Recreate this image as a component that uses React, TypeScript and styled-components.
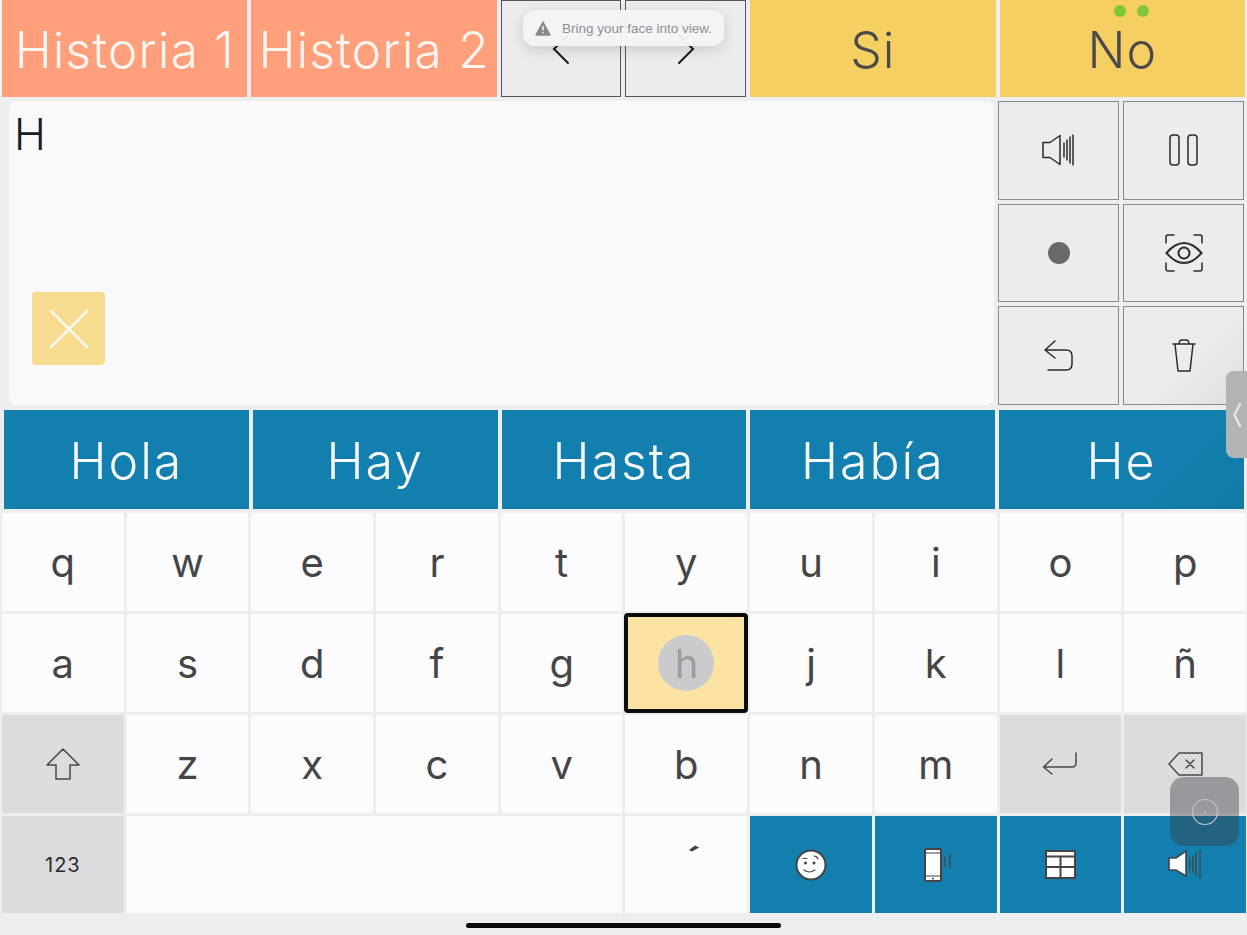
import React from "react";
import styled, { createGlobalStyle } from "styled-components";

const Global = createGlobalStyle`
  html, body { margin: 0; padding: 0; width: 1247px; height: 935px; overflow: hidden; background: #eeedf0; }
  * { box-sizing: border-box; }
  body { font-family: Inter, "Open Sans", "Liberation Sans", sans-serif; }
`;

const Page = styled.div`
  position: relative;
  width: 1247px;
  height: 935px;
  background: #eeedf0;
  display: flex;
  flex-direction: column;
  overflow: hidden;
`;
const TopBar = styled.div`
  display: grid;
  grid-template-columns: repeat(5, 1fr);
  gap: 4px;
  height: 97px;
  padding: 0 2px;
`;
const Phrase = styled.div<{ $tone: "salmon" | "yellow" }>`
  display: flex;
  align-items: center;
  justify-content: center;
  font-size: 50px;
  font-weight: 300;
  letter-spacing: 1px;
  white-space: nowrap;
  background: ${(p) => (p.$tone === "salmon" ? "#ff9f7b" : "#f6cf62")};
  color: ${(p) => (p.$tone === "salmon" ? "#fff6f0" : "#4a4a4a")};
  padding-top: 2px;
`;
const NavPair = styled.div`
  display: grid;
  grid-template-columns: 1fr 1fr;
  gap: 4px;
`;
const NavButton = styled.div`
  display: flex;
  align-items: center;
  justify-content: center;
  background: #ecebee;
  border: 1px solid #555;
`;
const Middle = styled.div`
  display: flex;
  gap: 4px;
  height: 304px;
  margin-top: 4px;
  padding: 0 3px 0 9px;
`;
const Editor = styled.div`
  flex: 1;
  display: flex;
  flex-direction: column;
  background: #f9f8fb;
  border-radius: 8px;
  padding: 8px 0 40px 5px;
`;
const EditorText = styled.div`
  font-size: 43px;
  font-weight: 300;
  line-height: 50px;
  color: #1c1c1c;
`;
const Dismiss = styled.div`
  width: 73px;
  height: 73px;
  margin: auto 0 0 18px;
  background: #f7dc8f;
  border-radius: 4px;
  display: flex;
  align-items: center;
  justify-content: center;
`;
const SidePanel = styled.div`
  display: grid;
  grid-template-columns: 121px 121px;
  grid-template-rows: repeat(3, 1fr);
  gap: 4px;
`;
const SideButton = styled.div`
  display: flex;
  align-items: center;
  justify-content: center;
  background: #ecebee;
  border: 1px solid #8a8a8c;
  &:last-child {
    background: linear-gradient(135deg, #ecebee 55%, #dedde0);
  }
`;
const Suggestions = styled.div`
  display: grid;
  grid-template-columns: repeat(5, 1fr);
  gap: 4px;
  height: 99px;
  margin-top: 5px;
  padding: 0 3px 0 4px;
`;
const Suggestion = styled.div`
  display: flex;
  align-items: center;
  justify-content: center;
  background: #127fae;
  color: #f6fafc;
  font-size: 50px;
  font-weight: 300;
  letter-spacing: 2px;
  padding-top: 2px;
  &:last-child {
    background: linear-gradient(135deg, #127fae 70%, #117aa7);
  }
`;
const Keyboard = styled.div`
  display: grid;
  grid-template-columns: repeat(10, 1fr);
  grid-template-rows: 98px 98px 98px 97px;
  gap: 3px;
  height: 400px;
  margin-top: 4px;
  padding: 0 1px 0 2px;
`;
const Key = styled.div<{ $kind?: "letter" | "grey" | "blue" | "active"; $span?: number }>`
  position: relative;
  display: flex;
  align-items: center;
  justify-content: center;
  grid-column: span ${(p) => p.$span ?? 1};
  font-size: 40px;
  font-weight: 400;
  color: #454545;
  background: ${(p) =>
    p.$kind === "grey" ? "#dcdbde" : p.$kind === "blue" ? "#127fae" : p.$kind === "active" ? "#fbe3a4" : "#fcfbfe"};
  ${(p) => p.$kind === "active" && "border: 4px solid #0c0c0c; border-radius: 4px; margin: -1px;"}
`;
const SmallLabel = styled.span`
  font-size: 20px;
  letter-spacing: 1px;
  color: #2a2a2a;
  font-weight: 400;
`;
const Accent = styled.span`
  font-size: 40px;
  transform: translateY(-2px) rotate(28deg) scale(1.2);
`;
const Gaze = styled.div`
  position: absolute;
  left: 30px;
  top: 18px;
  width: 56px;
  height: 56px;
  border-radius: 50%;
  background: #cbcacd;
  color: #9d9da0;
  display: flex;
  align-items: center;
  justify-content: center;
`;
const PhoneSlot = styled.span`
  display: flex;
  margin-left: 5px;
`;
const HomeBar = styled.div`
  position: absolute;
  left: 466px;
  top: 923px;
  width: 315px;
  height: 5px;
  border-radius: 3px;
  background: #0a0a0a;
`;
const Toast = styled.div`
  position: absolute;
  left: 523px;
  top: 10px;
  width: 201px;
  height: 36px;
  display: flex;
  align-items: center;
  gap: 11px;
  padding-left: 12px;
  background: rgba(244, 243, 246, 0.97);
  border-radius: 12px;
  box-shadow: 0 4px 14px rgba(0, 0, 0, 0.14);
  font-family: "Liberation Sans", Arial, sans-serif;
  font-size: 13.5px;
  color: #8f8f92;
  white-space: nowrap;
`;
const Dot = styled.span`
  width: 12px;
  height: 12px;
  border-radius: 50%;
  background: #7fc63a;
`;
const Dots = styled.div`
  position: absolute;
  left: 1114px;
  top: 5px;
  display: flex;
  gap: 11px;
`;
const Handle = styled.div`
  position: absolute;
  right: 0;
  top: 371px;
  width: 21px;
  height: 87px;
  background: #b3b2b5;
  border-radius: 8px 0 0 8px;
  display: flex;
  align-items: center;
  justify-content: center;
`;
const Assistive = styled.div`
  position: absolute;
  left: 1170px;
  top: 777px;
  width: 69px;
  height: 69px;
  border-radius: 14px;
  background: rgba(60, 60, 64, 0.42);
  display: flex;
  align-items: center;
  justify-content: center;
`;

const line = { fill: "none", stroke: "#2b2b2b", strokeWidth: 1.5, strokeLinecap: "round" as const, strokeLinejoin: "round" as const };
const keyLine = { ...line, stroke: "#4a4a4a" };

const Speaker = () => (
  <svg width="36" height="32" viewBox="0 0 36 32">
    <path d="M2 8.500H9L19 1.500V30.500L9 23.500H2Z" {...line} />
    <path d="M23 9V23M26 6V26M29 3V29M32 1V31" {...line} />
  </svg>
);
const Pause = () => (
  <svg width="30" height="32" viewBox="0 0 30 32">
    <rect x="1" y="1" width="9" height="30" rx="3" {...line} />
    <rect x="19" y="1" width="9" height="30" rx="3" {...line} />
  </svg>
);
const RecordDot = () => (
  <svg width="24" height="24" viewBox="0 0 24 24"><circle cx="12" cy="12" r="11" fill="#69686c" /></svg>
);
const EyeScan = () => (
  <svg width="38" height="38" viewBox="0 0 38 38">
    <path d="M1 9V3Q1 1 3 1H9M29 1H35Q37 1 37 3V9M37 29V35Q37 37 35 37H29M9 37H3Q1 37 1 35V29" {...line} />
    <path d="M1.500 19Q10 9 19 9T36.500 19Q28 29 19 29T1.500 19Z" {...line} strokeWidth={2} />
    <circle cx="19" cy="19" r="5.500" {...line} strokeWidth={2} />
  </svg>
);
const Undo = () => (
  <svg width="30" height="32" viewBox="0 0 30 32">
    <path d="M11 1L1 10L11 18M1 10H22Q28 10 28 16V24Q28 30 22 30H4" {...line} />
  </svg>
);
const Trash = () => (
  <svg width="24" height="34" viewBox="0 0 24 34">
    <path d="M1 5H23M3 5L6 32H18L21 5M7 5Q7 1 10 1H14Q17 1 17 5" {...line} />
  </svg>
);
const ShiftArrow = () => (
  <svg width="34" height="32" viewBox="0 0 34 32">
    <path d="M17 1L33 17H24V31H10V17H1Z" {...keyLine} />
  </svg>
);
const Enter = () => (
  <svg width="36" height="24" viewBox="0 0 36 24">
    <path d="M34 1V11Q34 15 30 15H2M10 7L1.500 15L10 22" {...keyLine} />
  </svg>
);
const Backspace = () => (
  <svg width="35" height="24" viewBox="0 0 35 24">
    <path d="M11 1H34V23H11L1 12Z" {...keyLine} />
    <path d="M18 8L26 16M26 8L18 16" {...keyLine} />
  </svg>
);
const Smile = () => (
  <svg width="32" height="32" viewBox="0 0 32 32">
    <circle cx="16" cy="16" r="14.500" fill="#fff" stroke="#444" strokeWidth="2" />
    <circle cx="10.500" cy="14" r="1.500" fill="#444" />
    <circle cx="19" cy="14" r="1.500" fill="#444" />
    <path d="M9 21Q14 25 20 21M8 9.500H12M19 7Q22 7 23 10" fill="none" stroke="#444" strokeWidth="1.200" strokeLinecap="round" />
  </svg>
);
const Phone = () => (
  <svg width="28" height="34" viewBox="0 0 28 34">
    <rect x="1" y="1" width="16" height="32" rx="1.500" fill="#fff" stroke="#444" strokeWidth="2" />
    <path d="M2 5H16M2 28H16" stroke="#444" strokeWidth="1" />
    <circle cx="9" cy="30.500" r="1" fill="#444" />
    <path d="M21 9V18M26 6V20" stroke="#444" strokeWidth="1.400" />
  </svg>
);
const Table = () => (
  <svg width="31" height="29" viewBox="0 0 31 29">
    <rect x="1" y="1" width="29" height="27" fill="#fff" stroke="#444" strokeWidth="2" />
    <path d="M1 6.500H30M1 17H30M15.500 6.500V28" stroke="#444" strokeWidth="2" />
  </svg>
);
const SpeakerWhite = () => (
  <svg width="34" height="31" viewBox="0 0 34 31">
    <path d="M1 9H8L18 2V27L8 21H1Z" fill="#fff" stroke="#444" strokeWidth="1.600" />
    <path d="M22 10V20M25 7V24M28 3V27M32 1V30" stroke="#444" strokeWidth="1.300" fill="none" />
  </svg>
);

const rows = ["qwertyuiop", "asdfg", "jklñ", "zxcvbnm"];
const suggestions = ["Hola", "Hay", "Hasta", "Había", "He"];
const side = [<Speaker />, <Pause />, <RecordDot />, <EyeScan />, <Undo />, <Trash />];

export default function App() {
  return (
    <Page>
      <Global />
      <TopBar>
        <Phrase $tone="salmon">Historia 1</Phrase>
        <Phrase $tone="salmon">Historia 2</Phrase>
        <NavPair>
          <NavButton>
            <svg width="18" height="32" viewBox="0 0 18 32">
              <path d="M16 2L2 16L16 30" fill="none" stroke="#1a1a1a" strokeWidth="2" strokeLinecap="round" />
            </svg>
          </NavButton>
          <NavButton>
            <svg width="18" height="32" viewBox="0 0 18 32">
              <path d="M2 2L16 16L2 30" fill="none" stroke="#1a1a1a" strokeWidth="2" strokeLinecap="round" />
            </svg>
          </NavButton>
        </NavPair>
        <Phrase $tone="yellow">Si</Phrase>
        <Phrase $tone="yellow">No</Phrase>
      </TopBar>

      <Middle>
        <Editor>
          <EditorText>H</EditorText>
          <Dismiss>
            <svg width="40" height="40" viewBox="0 0 40 40">
              <path d="M2 2L38 38M38 2L2 38" stroke="#fbf8ee" strokeWidth="2.500" strokeLinecap="round" />
            </svg>
          </Dismiss>
        </Editor>
        <SidePanel>
          {side.map((icon, i) => (
            <SideButton key={i}>{icon}</SideButton>
          ))}
        </SidePanel>
      </Middle>

      <Suggestions>
        {suggestions.map((s) => (
          <Suggestion key={s}>{s}</Suggestion>
        ))}
      </Suggestions>

      <Keyboard>
        {rows[0].split("").map((c) => (
          <Key key={c}>{c}</Key>
        ))}
        {rows[1].split("").map((c) => (
          <Key key={c}>{c}</Key>
        ))}
        <Key $kind="active">
          <Gaze>h</Gaze>
        </Key>
        {rows[2].split("").map((c) => (
          <Key key={c}>{c}</Key>
        ))}
        <Key $kind="grey"><ShiftArrow /></Key>
        {rows[3].split("").map((c) => (
          <Key key={c}>{c}</Key>
        ))}
        <Key $kind="grey"><Enter /></Key>
        <Key $kind="grey"><Backspace /></Key>
        <Key $kind="grey"><SmallLabel>123</SmallLabel></Key>
        <Key $span={4} />
        <Key><Accent>´</Accent></Key>
        <Key $kind="blue"><Smile /></Key>
        <Key $kind="blue"><PhoneSlot><Phone /></PhoneSlot></Key>
        <Key $kind="blue"><Table /></Key>
        <Key $kind="blue"><SpeakerWhite /></Key>
      </Keyboard>

      <HomeBar />
      <Toast>
        <svg width="16" height="15" viewBox="0 0 16 15">
          <path d="M8 1L15 14H1Z" fill="#8a8a8d" stroke="#8a8a8d" strokeWidth="1.500" strokeLinejoin="round" />
          <path d="M8 5V9.500M8 11V12.200" stroke="#f4f3f6" strokeWidth="1.500" />
        </svg>
        Bring your face into view.
      </Toast>
      <Dots><Dot /><Dot /></Dots>
      <Handle>
        <svg width="10" height="26" viewBox="0 0 10 26">
          <path d="M8 2L2.500 13L8 24" fill="none" stroke="#e4e4e6" strokeWidth="2.500" strokeLinecap="round" />
        </svg>
      </Handle>
      <Assistive>
        <svg width="28" height="28" viewBox="0 0 28 28">
          <circle cx="14" cy="14" r="12.500" fill="none" stroke="#c3c3c6" strokeWidth="1.200" />
          <circle cx="14" cy="14" r="1" fill="#c3c3c6" />
        </svg>
      </Assistive>
    </Page>
  );
}
